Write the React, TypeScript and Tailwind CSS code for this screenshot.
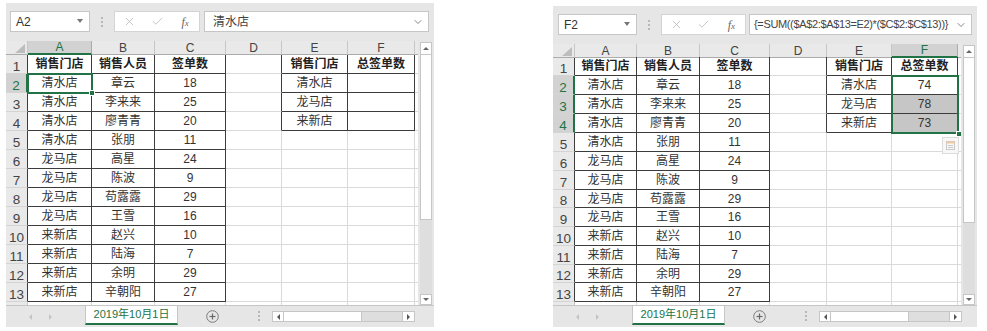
import React from 'react';
import { X, Check, ChevronDown } from 'lucide-react';

const ABC: string[][] = [
  ['销售门店', '销售人员', '签单数'],
  ['清水店', '章云', '18'],
  ['清水店', '李来来', '25'],
  ['清水店', '廖青青', '20'],
  ['清水店', '张朋', '11'],
  ['龙马店', '高星', '24'],
  ['龙马店', '陈波', '9'],
  ['龙马店', '苟露露', '29'],
  ['龙马店', '王雪', '16'],
  ['来新店', '赵兴', '10'],
  ['来新店', '陆海', '7'],
  ['来新店', '余明', '29'],
  ['来新店', '辛朝阳', '27'],
];
const EF: string[][] = [
  ['销售门店', '总签单数'],
  ['清水店', '74'],
  ['龙马店', '78'],
  ['来新店', '73'],
];
const LETTERS = ['A', 'B', 'C', 'D', 'E', 'F'];

const inT = (r: number, c: number) =>
  (r >= 1 && r <= 13 && c >= 0 && c <= 2) || (r >= 1 && r <= 4 && (c === 4 || c === 5));

type PanelProps = {
  right: boolean;
  outer: string;
  nameBox: string;
  btnBox: string;
  inputBox: string;
  gridCols: string;
  gridH: string;
  headerH: string;
  rowH: string[];
  sel: string;
  handle: string;
};

function Dots({ cls }: { cls: string }) {
  return (
    <div className={`flex flex-col items-center justify-center gap-[2px] ${cls}`}>
      <span className="h-[2px] w-[2px] bg-[#b8b8b8]" />
      <span className="h-[2px] w-[2px] bg-[#b8b8b8]" />
      <span className="h-[2px] w-[2px] bg-[#b8b8b8]" />
    </div>
  );
}

function Panel(p: PanelProps) {
  const { right } = p;
  const rows = Array.from({ length: 14 }, (_, i) => i + 1);
  return (
    <div
      className={`flex shrink-0 flex-col bg-[#e6e6e6] font-['Liberation_Sans','Noto_Sans_CJK_SC',sans-serif] ${p.outer}`}
    >
      {/* formula bar */}
      <div className="mt-[8px] flex h-[21px] shrink-0">
        <div className={`relative flex items-center border border-[#c6c6c6] bg-white ${p.nameBox}`}>
          <span className="pl-[5px] text-[12px] text-[#333]">{right ? 'F2' : 'A2'}</span>
          <span className="absolute right-[6px] top-[7px] h-0 w-0 border-x-[3px] border-t-[4px] border-x-transparent border-t-[#777]" />
        </div>
        <Dots cls="w-[24px]" />
        <div className={`flex items-center border border-[#d4d4d4] bg-white pl-[1px] ${p.btnBox}`}>
          <div className="flex w-[28px] justify-center">
            <X size={13} strokeWidth={1.4} color="#b4b4b4" />
          </div>
          <div className="flex w-[28px] justify-center">
            <Check size={13} strokeWidth={1.4} color="#b4b4b4" />
          </div>
          <div className="flex w-[28px] justify-center font-['Liberation_Serif',serif] text-[12px] italic text-[#666]">
            <span>
              f<span className="text-[9px]">x</span>
            </span>
          </div>
        </div>
        <div className={`flex flex-1 items-center justify-between border border-[#c6c6c6] bg-white pr-[4px] ${p.inputBox}`}>
          {right ? (
            <span className="whitespace-nowrap text-[11px] tracking-[-0.35px] text-[#444]">
              {'{=SUM(($A$2:$A$13=E2)*($C$2:$C$13))}'}
            </span>
          ) : (
            <span className="text-[12px] text-[#444]">清水店</span>
          )}
          <ChevronDown size={12} strokeWidth={1.6} color="#666" />
        </div>
      </div>

      {/* grid */}
      <div className={`mt-[9px] flex shrink-0 ${p.gridH}`}>
        <div className="relative flex flex-col overflow-hidden bg-white">
          <div className={`grid shrink-0 ${p.gridCols} ${p.headerH}`}>
            <div className="relative box-border border-b border-r border-b-[#ababab] border-r-[#c6c6c6] bg-[#e9e9e9]">
              <svg className="absolute bottom-[1px] right-[2px]" width="10" height="9" viewBox="0 0 10 9">
                <polygon points="10,0 10,9 0,9" fill="#bdbdbd" />
              </svg>
            </div>
            {LETTERS.map((l, i) => {
              const hl = right ? i === 5 : i === 0;
              return (
                <div
                  key={l}
                  className={`box-border flex items-center justify-center border-r text-[12px] leading-none ${
                    hl
                      ? 'border-b-2 border-b-[#217346] border-r-[#ababab] bg-[#d2d2d2] text-[#217346]'
                      : 'border-b border-b-[#ababab] border-r-[#c6c6c6] bg-[#e9e9e9] text-[#444]'
                  }`}
                >
                  {l}
                </div>
              );
            })}
            <div className="box-border border-b border-b-[#ababab] bg-[#e9e9e9]" />
          </div>

          {rows.map((r) => {
            const hl = right ? r >= 2 && r <= 4 : r === 2;
            return (
              <div key={r} className={`grid shrink-0 ${p.gridCols} ${p.rowH[r - 1]}`}>
                <div
                  className={`box-border flex items-end justify-center border-b border-b-[#d4d4d4] text-[13.5px] leading-none ${
                    hl
                      ? 'border-r-2 border-r-[#217346] bg-[#d2d2d2] text-[#217346]'
                      : r <= 13
                      ? 'border-r border-r-[#3c3c3c] bg-[#e9e9e9] text-[#444]'
                      : 'border-r border-r-[#c6c6c6] bg-[#e9e9e9] text-[#444]'
                  }`}
                >
                  {r <= 13 ? r : ''}
                </div>
                {[0, 1, 2, 3, 4, 5, 6].map((c) => {
                  const rd = inT(r, c) || inT(r, c + 1);
                  const bd = inT(r, c) || inT(r + 1, c);
                  let txt = '';
                  if (r <= 13 && c <= 2) txt = ABC[r - 1][c];
                  else if (r <= 4 && c === 4) txt = EF[r - 1][0];
                  else if (r <= 4 && c === 5 && (right || r === 1)) txt = EF[r - 1][1];
                  const bold = r === 1 && inT(r, c);
                  const shade = right && c === 5 && (r === 3 || r === 4);
                  return (
                    <div
                      key={c}
                      className={`box-border flex items-center justify-center overflow-hidden whitespace-nowrap border-b text-[12px] leading-none ${
                        c < 6 ? 'border-r' : ''
                      } ${rd ? 'border-r-[#3c3c3c]' : 'border-r-[#dadada]'} ${
                        bd ? 'border-b-[#3c3c3c]' : 'border-b-[#dadada]'
                      } ${bold ? 'font-bold text-[#222]' : 'text-[#333]'} ${shade ? 'bg-[#c6c6c6]' : ''}`}
                    >
                      {txt}
                    </div>
                  );
                })}
              </div>
            );
          })}

          {/* selection */}
          <div className={`absolute border-2 border-[#217346] ${p.sel}`} />
          <div className={`absolute h-[6px] w-[6px] border border-white bg-[#217346] ${p.handle}`} />
          {right && (
            <div className="absolute left-[389px] top-[93px] flex h-[17px] w-[17px] items-center justify-center border border-[#dcdcdc] bg-[#f7f7f7]">
              <svg width="11" height="11" viewBox="0 0 11 11">
                <rect x="1.5" y="1.5" width="8" height="8" fill="none" stroke="#c9c9c9" />
                <rect x="1.5" y="1.5" width="8" height="2" fill="#f2c9a0" />
                <line x1="3" y1="5.5" x2="8" y2="5.5" stroke="#c9c9c9" />
                <line x1="3" y1="7.5" x2="8" y2="7.5" stroke="#c9c9c9" />
              </svg>
            </div>
          )}
        </div>

        {/* vertical scrollbar */}
        <div className="flex w-[16px] flex-col px-[2px] pt-[1px]">
          <div className="flex h-[13px] shrink-0 items-center justify-center border border-[#c6c6c6] bg-white">
            <span className="h-0 w-0 border-x-[3px] border-b-[3px] border-x-transparent border-b-[#666]" />
          </div>
          <div className="h-[165px] shrink-0 border-x border-b border-[#c6c6c6] bg-white" />
          <div className="flex-1 bg-[#dedede]" />
          <div className="flex h-[11px] shrink-0 items-center justify-center border border-[#c6c6c6] bg-white">
            <span className="h-0 w-0 border-x-[3px] border-t-[3px] border-x-transparent border-t-[#666]" />
          </div>
        </div>
      </div>

      {/* sheet tabs */}
      <div className="flex h-[22px] shrink-0 border-t border-[#c6c6c6]">
        <div className="flex w-[79px] items-center gap-[17px] pl-[23px]">
          <span className="h-0 w-0 border-y-[3px] border-r-[3px] border-y-transparent border-r-[#c4c4c4]" />
          <span className="h-0 w-0 border-y-[3px] border-l-[3px] border-y-transparent border-l-[#c4c4c4]" />
        </div>
        <div className="box-border flex h-[19px] w-[93px] items-center justify-center border-x border-b-2 border-x-[#c6c6c6] border-b-[#217346] bg-white text-[11px] text-[#217346]">
          2019年10月1日
        </div>
        <div className="ml-[28px] flex items-center pb-[1px]">
          <svg width="13" height="13" viewBox="0 0 13 13">
            <circle cx="6.5" cy="6.5" r="5.8" fill="none" stroke="#7a7a7a" strokeWidth="1" />
            <line x1="3.5" y1="6.5" x2="9.5" y2="6.5" stroke="#6a6a6a" strokeWidth="1.2" />
            <line x1="6.5" y1="3.5" x2="6.5" y2="9.5" stroke="#6a6a6a" strokeWidth="1.2" />
          </svg>
        </div>
        <Dots cls="ml-[38px] w-[4px] pb-[1px]" />
        <div className="ml-[11px] mt-[5px] flex h-[11px] w-[143px] border border-[#c6c6c6] bg-white">
          <div className="flex w-[11px] items-center justify-center border-r border-[#c6c6c6]">
            <span className="h-0 w-0 border-y-[3px] border-r-[3px] border-y-transparent border-r-[#555]" />
          </div>
          <div className="w-[78px] border-r border-[#c6c6c6] bg-white" />
          <div className="flex-1 bg-[#dedede]" />
          <div className="flex w-[12px] items-center justify-center border-l border-[#c6c6c6]">
            <span className="h-0 w-0 border-y-[3px] border-l-[3px] border-y-transparent border-l-[#555]" />
          </div>
        </div>
      </div>
    </div>
  );
}

export default function App() {
  const left19 = Array.from({ length: 14 }, () => 'h-[19px]');
  const rightRows = Array.from({ length: 14 }, (_, i) => (i === 7 || i === 11 ? 'h-[18px]' : 'h-[19px]'));
  return (
    <div className="h-[331px] w-[987px] overflow-hidden bg-white">
      <div className="flex items-start">
        <Panel
          right={false}
          outer="ml-[6px] mt-[3px] h-[324px] w-[428px]"
          nameBox="ml-[4px] w-[80px]"
          btnBox="w-[86px]"
          inputBox="ml-[4px] mr-[5px] pl-[8px]"
          gridCols="grid-cols-[22px_64px_63px_71px_56px_66px_67px_3px]"
          gridH="h-[264px]"
          headerH="h-[14px]"
          rowH={left19}
          sel="left-[21px] top-[32px] h-[21px] w-[66px]"
          handle="left-[83px] top-[49px]"
        />
        <Panel
          right={true}
          outer="ml-[119px] mt-[6px] h-[321px] w-[424px]"
          nameBox="ml-[5px] w-[79px]"
          btnBox="w-[85px]"
          inputBox="ml-[3px] mr-[5px] pl-[4px]"
          gridCols="grid-cols-[22px_62px_63px_70px_57px_65px_66px_3px]"
          gridH="h-[261px]"
          headerH="h-[13px]"
          rowH={rightRows}
          sel="left-[338px] top-[31px] h-[59px] w-[68px]"
          handle="left-[403px] top-[87px]"
        />
      </div>
    </div>
  );
}
